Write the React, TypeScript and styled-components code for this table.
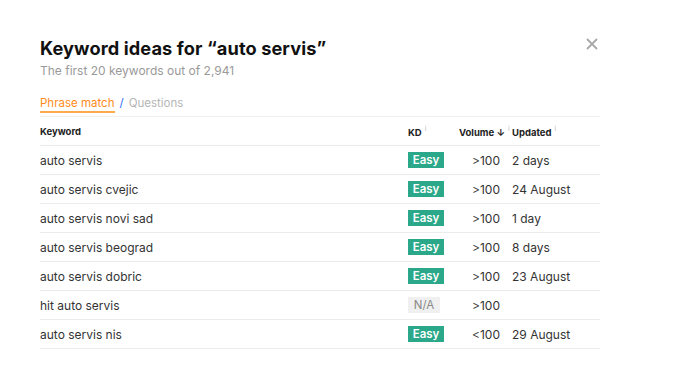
import styled, { createGlobalStyle } from 'styled-components';

const GlobalStyle = createGlobalStyle`
  body {
    margin: 0;
    background: #fff;
    font-family: Inter, "Noto Sans", sans-serif;
    color: #333;
  }
`;

const Modal = styled.div`
  position: relative;
  width: 674px;
  height: 369px;
  box-sizing: border-box;
  padding: 36px 74px 0 40px;
`;

const Title = styled.h1`
  margin: 0;
  font-size: 18.2px;
  font-weight: 700;
  line-height: 25px;
  color: #111;
  letter-spacing: 0.1px;
`;

const Subtitle = styled.div`
  margin-top: 2px;
  font-size: 12px;
  line-height: 16px;
  color: #9a9a9a;
`;

const CloseButton = styled.button`
  position: absolute;
  top: 36px;
  left: 584px;
  width: 16px;
  height: 16px;
  padding: 0;
  border: none;
  background: none;
  cursor: pointer;
`;

const Tabs = styled.div`
  display: flex;
  align-items: flex-start;
  gap: 5px;
  margin-top: 17px;
  font-size: 11.5px;
  line-height: 14px;
`;

const Tab = styled.span<{ $active?: boolean }>`
  color: ${(p) => (p.$active ? '#ff8c1a' : '#b5b5b5')};
  padding-bottom: 1px;
  border-bottom: 2px solid ${(p) => (p.$active ? '#ffa94d' : 'transparent')};
`;

const Slash = styled.span`
  color: #2b6cf6;
`;

const Table = styled.div`
  margin-top: 3px;
  width: 560px;
  border-top: 1px solid #f0f0f0;
`;

const Row = styled.div<{ $head?: boolean }>`
  display: grid;
  grid-template-columns: 368px 51px 49px 1fr;
  align-items: center;
  height: 28px;
  border-bottom: 1px solid #ececec;
  font-size: ${(p) => (p.$head ? '9.5px' : '12px')};
  font-weight: ${(p) => (p.$head ? 700 : 400)};
  color: ${(p) => (p.$head ? '#222' : '#333')};
`;

const Volume = styled.div<{ $head?: boolean }>`
  text-align: ${(p) => (p.$head ? 'left' : 'right')};
  padding-right: ${(p) => (p.$head ? '0' : '8px')};
  white-space: nowrap;
`;

const Updated = styled.div`
  padding-left: 4px;
  white-space: nowrap;
`;

const Info = styled.sup`
  font-size: 7px;
  font-weight: 400;
  color: #bdbdbd;
  margin-left: 3px;
  vertical-align: 5px;
`;

const Badge = styled.span<{ $na?: boolean }>`
  display: inline-flex;
  align-items: center;
  justify-content: center;
  width: ${(p) => (p.$na ? '32px' : '36px')};
  height: 16px;
  font-size: 11.5px;
  font-weight: ${(p) => (p.$na ? 400 : 600)};
  color: ${(p) => (p.$na ? '#888' : '#fff')};
  background: ${(p) => (p.$na ? '#f0f0f0' : '#2aa889')};
`;

const rows = [
  { kw: 'auto servis', kd: 'Easy', vol: '>100', upd: '2 days' },
  { kw: 'auto servis cvejic', kd: 'Easy', vol: '>100', upd: '24 August' },
  { kw: 'auto servis novi sad', kd: 'Easy', vol: '>100', upd: '1 day' },
  { kw: 'auto servis beograd', kd: 'Easy', vol: '>100', upd: '8 days' },
  { kw: 'auto servis dobric', kd: 'Easy', vol: '>100', upd: '23 August' },
  { kw: 'hit auto servis', kd: 'N/A', vol: '>100', upd: '' },
  { kw: 'auto servis nis', kd: 'Easy', vol: '<100', upd: '29 August' },
];

export default function App() {
  return (
    <>
      <GlobalStyle />
      <Modal>
        <Title>Keyword ideas for “auto servis”</Title>
        <Subtitle>The first 20 keywords out of 2,941</Subtitle>
        <CloseButton aria-label="Close">
          <svg width="16" height="16" viewBox="0 0 16 16">
            <path d="M3 3 L13 13 M13 3 L3 13" stroke="#a8a8a8" strokeWidth="1.8" fill="none" />
          </svg>
        </CloseButton>
        <Tabs>
          <Tab $active>Phrase match</Tab>
          <Slash>/</Slash>
          <Tab>Questions</Tab>
        </Tabs>
        <Table>
          <Row $head>
            <div>Keyword</div>
            <div>
              KD<Info>i</Info>
            </div>
            <Volume $head>
              Volume ↓<Info>i</Info>
            </Volume>
            <Updated>
              Updated<Info>i</Info>
            </Updated>
          </Row>
          {rows.map((r) => (
            <Row key={r.kw}>
              <div>{r.kw}</div>
              <div>
                <Badge $na={r.kd === 'N/A'}>{r.kd}</Badge>
              </div>
              <Volume>{r.vol}</Volume>
              <Updated>{r.upd}</Updated>
            </Row>
          ))}
        </Table>
      </Modal>
    </>
  );
}
